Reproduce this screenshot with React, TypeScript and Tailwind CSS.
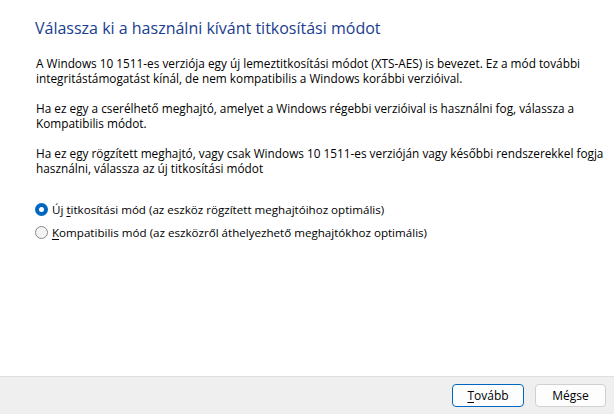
import { useState } from 'react'

// Windows-style BitLocker dialog page: choose encryption mode

const FONT = { fontFamily: '"Open Sans", "Noto Sans", sans-serif' }

function Radio({ checked }: { checked: boolean }) {
  return checked ? (
    <span className="flex h-[13px] w-[13px] shrink-0 items-center justify-center rounded-full bg-[#0067c0]">
      <span className="h-[5px] w-[5px] rounded-full bg-white" />
    </span>
  ) : (
    <span className="h-[13px] w-[13px] shrink-0 rounded-full border border-[#8a8a8a] bg-[#f3f3f3]" />
  )
}

export default function App() {
  const [mode, setMode] = useState<'new' | 'compat'>('new')

  return (
    <div className="flex h-[414px] w-[614px] flex-col bg-white text-black" style={FONT}>
      <div className="flex-1 pl-[35px] pt-[16px]">
        <h1 className="text-[16px] leading-[24px] text-[#1a3d8f] whitespace-nowrap">
          Válassza ki a használni kívánt titkosítási módot
        </h1>

        <div className="mt-[16px] pl-px text-[11.8px] leading-[15px] whitespace-nowrap">
          <p>
            A Windows 10 1511-es verziója egy új lemeztitkosítási módot (XTS-AES) is bevezet. Ez a mód további
            <br />
            integritástámogatást kínál, de nem kompatibilis a Windows korábbi verzióival.
          </p>
          <p className="mt-[15px]">
            Ha ez egy a cserélhető meghajtó, amelyet a Windows régebbi verzióival is használni fog, válassza a
            <br />
            Kompatibilis módot.
          </p>
          <p className="mt-[15px]">
            Ha ez egy rögzített meghajtó, vagy csak Windows 10 1511-es verzióján vagy későbbi rendszerekkel fogja
            <br />
            használni, válassza az új titkosítási módot
          </p>
        </div>

        <div className="mt-[27px] flex flex-col gap-[10px] text-[11.6px] leading-[13px]">
          <label className="flex items-center gap-[4px]" onClick={() => setMode('new')}>
            <Radio checked={mode === 'new'} />
            <span>
              Új <span className="underline underline-offset-2">t</span>itkosítási mód (az eszköz rögzített meghajtóihoz optimális)
            </span>
          </label>
          <label className="flex items-center gap-[4px]" onClick={() => setMode('compat')}>
            <Radio checked={mode === 'compat'} />
            <span>
              <span className="underline underline-offset-2">K</span>ompatibilis mód (az eszközről áthelyezhető meghajtókhoz optimális)
            </span>
          </label>
        </div>
      </div>

      <div className="flex h-[38px] items-center justify-end gap-[11px] border-t border-[#dfdfdf] bg-[#efefef] pr-[8px]">
        <button className="h-[23px] w-[72px] rounded-[4px] border border-[#0067c0] bg-[#fdfdfd] text-[12px]">
          <span className="underline underline-offset-2">T</span>ovább
        </button>
        <button className="h-[23px] w-[71px] rounded-[4px] border border-[#d0d0d0] bg-[#fdfdfd] text-[12px]">
          Mégse
        </button>
      </div>
    </div>
  )
}
